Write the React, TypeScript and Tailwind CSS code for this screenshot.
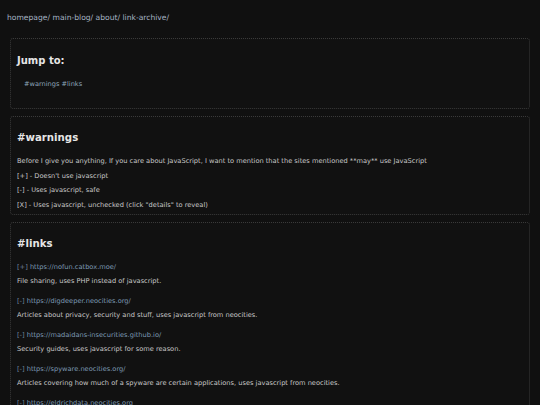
const links = [
  { tag: '[+]', url: 'https://nofun.catbox.moe/', desc: 'File sharing, uses PHP instead of javascript.' },
  { tag: '[-]', url: 'https://digdeeper.neocities.org/', desc: 'Articles about privacy, security and stuff, uses javascript from neocities.' },
  { tag: '[-]', url: 'https://madaidans-insecurities.github.io/', desc: 'Security guides, uses javascript for some reason.' },
  { tag: '[-]', url: 'https://spyware.neocities.org/', desc: 'Articles covering how much of a spyware are certain applications, uses javascript from neocities.' },
  { tag: '[-]', url: 'https://eldrichdata.neocities.org', desc: 'Data hoarding and archiving, uses javascript from neocities.' },
];

function Box({ children }: { children: React.ReactNode }) {
  return (
    <section className="mx-[3px] mt-[7px] rounded-[3px] border border-dotted border-[#3a3a3a] bg-[#111111] px-[6px]">
      {children}
    </section>
  );
}

export default function App() {
  return (
    <div className="min-h-screen bg-[#101010] px-[7px] pb-6 font-['DejaVu_Sans',sans-serif] text-[#c8c8c8]">
      {/* nav */}
      <nav className="pt-[12px] text-[7.6px] leading-[12px] text-[#a6b4c4]">
        <a>homepage/</a> <a>main-blog/</a> <a>about/</a> <a>link-archive/</a>
      </nav>

      <div className="pt-[14px]">
        <section className="mx-[3px] rounded-[3px] border border-dotted border-[#3a3a3a] bg-[#111111] px-[6px] pt-[14px] pb-[17px]">
          <h2 className="text-[10px] font-bold leading-[16px] text-[#e6e6e6]">Jump to:</h2>
          <p className="mt-[8px] pl-[7px] text-[6.6px] leading-[14px] text-[#8fa6ba]">
            <a>#warnings</a> <a>#links</a>
          </p>
        </section>

        <Box>
          <h2 className="pt-[13px] text-[10.2px] font-bold leading-[16px] text-[#e6e6e6]">#warnings</h2>
          <div className="mt-[8px] pb-[2px] text-[6.65px] leading-[14.6px]">
            <p>Before I give you anything, If you care about JavaScript, I want to mention that the sites mentioned **may** use JavaScript</p>
            <p>[+] - Doesn't use javascript</p>
            <p>[-] - Uses javascript, safe</p>
            <p>[X] - Uses javascript, unchecked (click "details" to reveal)</p>
          </div>
        </Box>

        <Box>
          <h2 className="pt-[13px] text-[10.2px] font-bold leading-[16px] text-[#e6e6e6]">#links</h2>
          <div className="mt-[8px] flex flex-col gap-[6px] pb-3 text-[6.65px] leading-[14px]">
            {links.map((l) => (
              <div key={l.url}>
                <p className="text-[#7d9ab4]">
                  <span className="text-[#6f8399]">{l.tag}</span> {l.url}
                </p>
                <p>{l.desc}</p>
              </div>
            ))}
          </div>
        </Box>
      </div>
    </div>
  );
}
